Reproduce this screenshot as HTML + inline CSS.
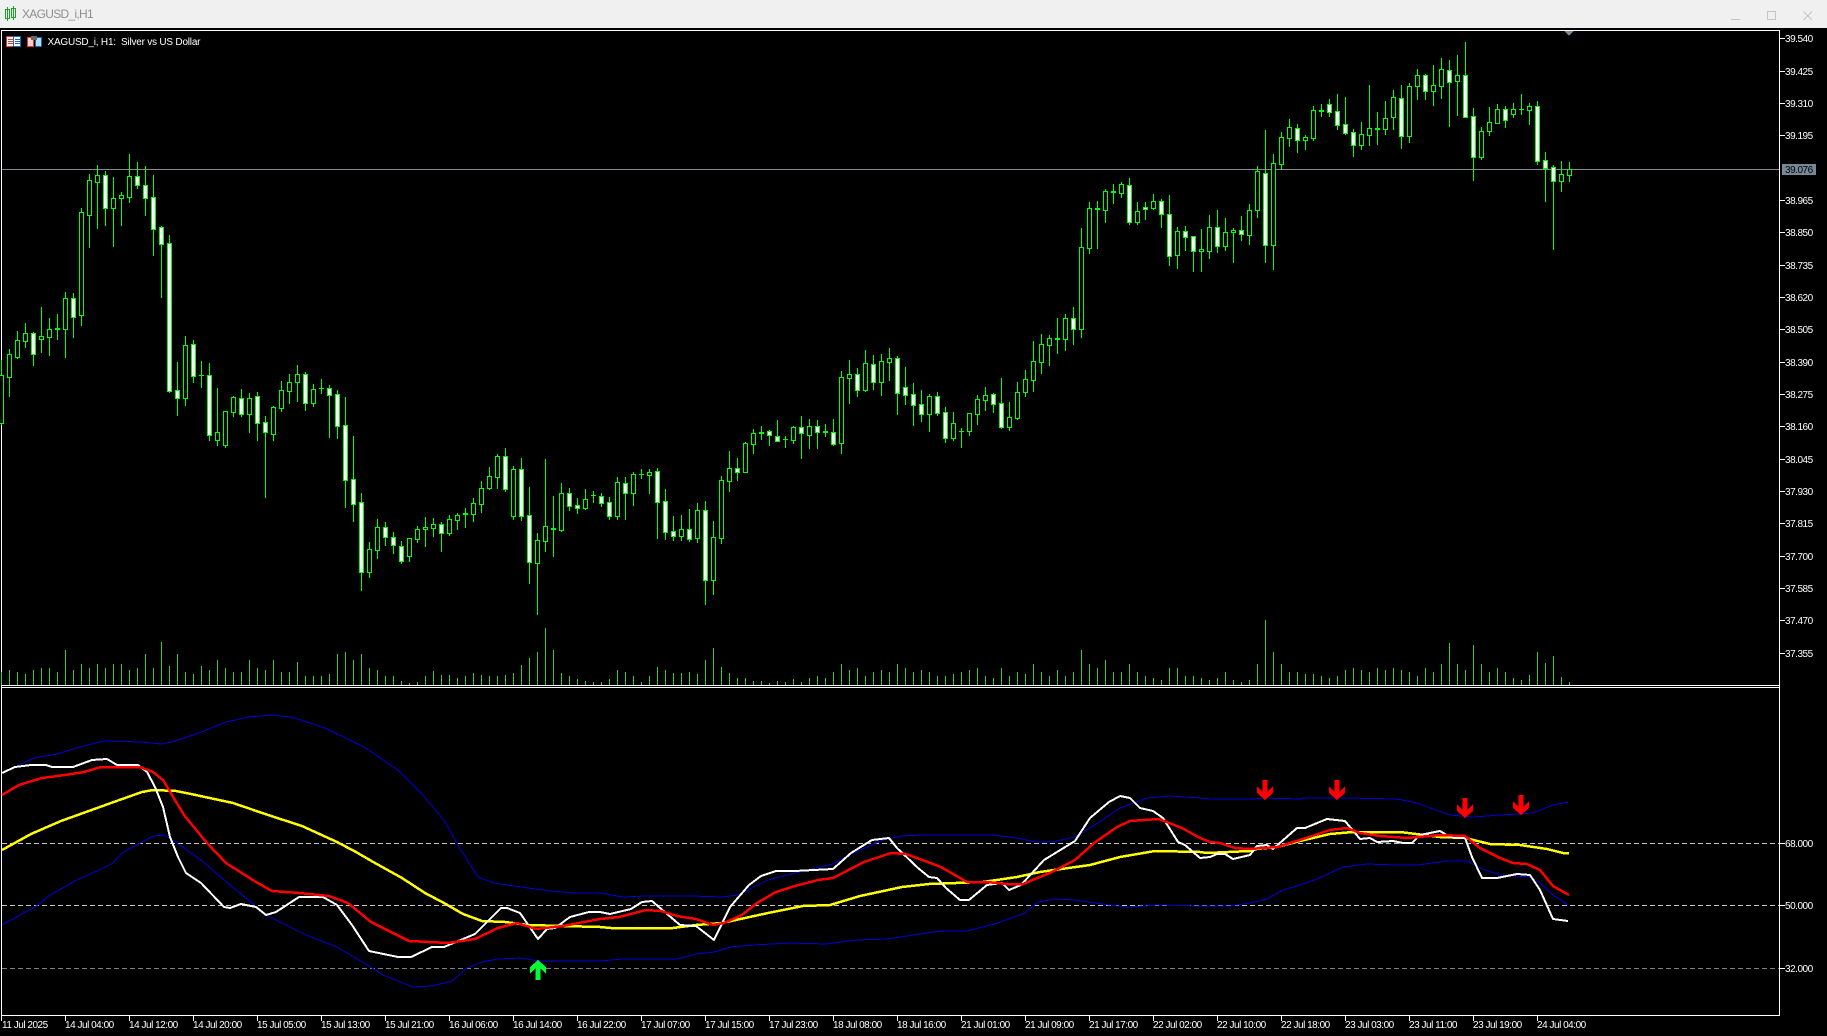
<!DOCTYPE html>
<html><head><meta charset="utf-8"><title>XAGUSD_i,H1</title>
<style>
html,body{margin:0;padding:0;background:#000;width:1827px;height:1036px;overflow:hidden}
svg{display:block}
text{font-family:"Liberation Sans",sans-serif;font-size:10px;fill:#fff;letter-spacing:-.48px;white-space:pre}
.l{fill:none;stroke-linejoin:round}
</style></head><body>
<svg xmlns="http://www.w3.org/2000/svg" width="1827" height="1036" viewBox="0 0 1827 1036">
<rect width="1827" height="1036" fill="#000"/>
<rect width="1827" height="28" fill="#f0f0f0"/>
<g shape-rendering="crispEdges" fill="none" stroke="#1aa32a">
<path d="M5.5 9.5h4v9h-4zM7.5 7V21M11.5 8.5h4v9h-4zM13.5 6V20"/>
</g>
<text x="22" y="18" style="font-size:12px;fill:#8e8e8e;letter-spacing:-.7px">XAGUSD_i,H1</text>
<g fill="none" stroke="#c4c4c4" shape-rendering="crispEdges">
<path d="M1731 19.5h9"/>
<rect x="1767.5" y="11.5" width="8" height="8"/>
</g>
<path d="M1803.5 11.5l8.5 8.5M1812 11.5l-8.5 8.5" stroke="#c4c4c4" fill="none"/>

<g shape-rendering="crispEdges">
<path d="M1 30.5H1779.5M1.5 30V1016M1779.5 30V1016M1 685.5H1780M1 687.5H1780M1 1015.5H1780" stroke="#fff" fill="none"/>
<path d="M2 169.5H1779" stroke="#838b94" fill="none"/>
<path d="M1564.5 31h9l-4.5 5z" fill="#778899"/>
<rect x="6.5" y="36.5" width="7" height="10" fill="#fff" stroke="#e03a30"/>
<rect x="13.5" y="36.5" width="7" height="10" fill="#fff" stroke="#1468b4"/>
<path d="M8 39.5h5M8 41.5h5M8 43.5h5" stroke="#e03a30" fill="none"/>
<path d="M15 39.5h5M15 41.5h5M15 43.5h5" stroke="#1468b4" fill="none"/>
<path d="M27.5 37.5h6v9h-6z" fill="#fbd0c8" stroke="#e03a30"/>
<path d="M35.5 37.5h6v9h-6z" fill="#b8dcf4" stroke="#1468b4"/>
<rect x="31" y="36" width="6" height="4" fill="#666"/>
</g>
<text x="47.5" y="45" textLength="153" lengthAdjust="spacing" style="letter-spacing:0">XAGUSD_i, H1:  Silver vs US Dollar</text>

<!-- volumes -->
<path shape-rendering="crispEdges" fill="none" stroke="#32cd32" d="M1.5 672V685M9.5 670V685M17.5 672V685M25.5 674V685M33.5 670V685M41.5 668V685M49.5 668V685M57.5 672V685M65.5 650V685M73.5 670V685M81.5 664V685M89.5 668V685M97.5 664V685M105.5 668V685M113.5 664V685M121.5 664V685M129.5 670V685M137.5 668V685M145.5 654V685M153.5 668V685M161.5 642V685M169.5 666V685M177.5 654V685M185.5 672V685M193.5 674V685M201.5 666V685M209.5 670V685M217.5 660V685M225.5 668V685M233.5 672V685M241.5 672V685M249.5 660V685M257.5 668V685M265.5 670V685M273.5 660V685M281.5 672V685M289.5 672V685M297.5 662V685M305.5 676V685M313.5 676V685M321.5 676V685M329.5 674V685M337.5 654V685M345.5 652V685M353.5 660V685M361.5 654V685M369.5 668V685M377.5 670V685M385.5 676V685M393.5 676V685M401.5 681V685M409.5 683V685M417.5 682V685M425.5 676V685M433.5 671V685M441.5 675V685M449.5 675V685M457.5 678V685M465.5 676V685M473.5 673V685M481.5 675V685M489.5 676V685M497.5 676V685M505.5 675V685M513.5 673V685M521.5 665V685M529.5 658V685M537.5 652V685M545.5 628V685M553.5 650V685M561.5 673V685M569.5 676V685M577.5 679V685M585.5 681V685M593.5 682V685M601.5 682V685M609.5 679V685M617.5 670V685M625.5 672V685M633.5 676V685M641.5 682V685M649.5 676V685M657.5 667V685M665.5 670V685M673.5 673V685M681.5 673V685M689.5 672V685M697.5 674V685M705.5 660V685M713.5 648V685M721.5 667V685M729.5 673V685M737.5 678V685M745.5 678V685M753.5 681V685M761.5 681V685M769.5 683V685M777.5 681V685M785.5 682V685M793.5 679V685M801.5 682V685M809.5 678V685M817.5 676V685M825.5 678V685M833.5 672V685M841.5 664V685M849.5 670V685M857.5 668V685M865.5 676V685M873.5 672V685M881.5 670V685M889.5 672V685M897.5 664V685M905.5 668V685M913.5 672V685M921.5 670V685M929.5 672V685M937.5 676V685M945.5 676V685M953.5 674V685M961.5 672V685M969.5 670V685M977.5 668V685M985.5 676V685M993.5 678V685M1001.5 668V685M1009.5 676V685M1017.5 672V685M1025.5 674V685M1033.5 664V685M1041.5 672V685M1049.5 676V685M1057.5 670V685M1065.5 676V685M1073.5 672V685M1081.5 650V685M1089.5 664V685M1097.5 668V685M1105.5 660V685M1113.5 672V685M1121.5 672V685M1129.5 664V685M1137.5 672V685M1145.5 676V685M1153.5 678V685M1161.5 680V685M1169.5 668V685M1177.5 668V685M1185.5 676V685M1193.5 676V685M1201.5 678V685M1209.5 680V685M1217.5 678V685M1225.5 672V685M1233.5 680V685M1241.5 682V685M1249.5 680V685M1257.5 664V685M1265.5 620V685M1273.5 652V685M1281.5 664V685M1289.5 672V685M1297.5 672V685M1305.5 674V685M1313.5 674V685M1321.5 676V685M1329.5 678V685M1337.5 676V685M1345.5 670V685M1353.5 668V685M1361.5 670V685M1369.5 672V685M1377.5 668V685M1385.5 670V685M1393.5 668V685M1401.5 670V685M1409.5 672V685M1417.5 676V685M1425.5 668V685M1433.5 672V685M1441.5 664V685M1449.5 643V685M1457.5 664V685M1465.5 670V685M1473.5 645V685M1481.5 664V685M1489.5 672V685M1497.5 668V685M1505.5 672V685M1513.5 678V685M1521.5 680V685M1529.5 675V685M1537.5 652V685M1545.5 663V685M1553.5 656V685M1561.5 677V685M1569.5 682V685"/>

<!-- wicks and doji -->
<path shape-rendering="crispEdges" fill="none" stroke="#0f0" d="M1.5 360V425M9.5 349V397M17.5 331V359M25.5 323V348M33.5 332V366M41.5 307V353M49.5 318V356M57.5 314V340M65.5 292V358M73.5 293V338M81.5 208V326M89.5 174V248M97.5 165V229M105.5 171V226M113.5 177V247M121.5 192V226M129.5 154V203M137.5 162V189M145.5 166V216M153.5 175V256M161.5 226V298M169.5 235V393M177.5 362V416M185.5 336V406M193.5 340V383M201.5 361V388M209.5 363V441M217.5 388V446M225.5 411V448M233.5 396V417M241.5 389V417M249.5 393V433M257.5 392V441M265.5 416V498M273.5 406V441M281.5 381V412M289.5 374V404M297.5 365V402M305.5 372V411M313.5 384V407M321.5 379V394M329.5 385V438M337.5 390V439M345.5 397V508M353.5 436V522M361.5 493V591M369.5 542V578M377.5 519V559M385.5 522V546M393.5 532V554M401.5 541V564M409.5 538V562M417.5 526V543M425.5 517V547M433.5 518V537M441.5 522V552M449.5 515V536M457.5 513V530M465.5 508V528M473.5 498V522M481.5 481V513M489.5 467V490M497.5 454V489M505.5 448V492M513.5 466V520M521.5 458V521M529.5 487V584M537.5 533V615M545.5 459V552M553.5 496V557M561.5 483V532M569.5 488V511M577.5 498V514M585.5 489V510M593.5 491V503M601.5 493V507M609.5 497V520M617.5 477V520M625.5 477V520M633.5 472V506M641.5 469V479M649.5 469V494M657.5 468V539M665.5 489V540M673.5 516V541M681.5 515V541M689.5 509V542M697.5 503V543M705.5 501V605M713.5 521V595M721.5 476V544M729.5 451V492M737.5 458V481M745.5 442V473M753.5 429V454M761.5 426V440M769.5 430V446M777.5 420V442M785.5 436V448M793.5 426V444M801.5 416V459M809.5 419V449M817.5 420V449M825.5 424V437M833.5 419V446M841.5 371V454M849.5 360V404M857.5 368V397M865.5 350V392M873.5 355V390M881.5 354V396M889.5 348V381M897.5 356V415M905.5 367V405M913.5 383V426M921.5 390V422M929.5 394V432M937.5 392V416M945.5 407V443M953.5 412V441M961.5 428V448M969.5 413V436M977.5 395V425M985.5 387V411M993.5 393V413M1001.5 378V429M1009.5 402V431M1017.5 382V420M1025.5 370V397M1033.5 341V392M1041.5 334V374M1049.5 335V366M1057.5 318V354M1065.5 314V351M1073.5 307V345M1081.5 228V338M1089.5 202V254M1097.5 201V249M1105.5 189V223M1113.5 184V204M1121.5 182V198M1129.5 178V225M1137.5 202V225M1145.5 202V220M1153.5 194V210M1161.5 199V228M1169.5 195V266M1177.5 227V269M1185.5 226V251M1193.5 236V272M1201.5 229V272M1209.5 215V259M1217.5 210V253M1225.5 218V251M1233.5 228V263M1241.5 216V241M1249.5 204V245M1257.5 166V218M1265.5 130V263M1273.5 154V270M1281.5 132V170M1289.5 119V147M1297.5 124V153M1305.5 135V150M1313.5 106V141M1321.5 104V117M1329.5 99V117M1337.5 94V130M1345.5 97V135M1353.5 129V157M1361.5 122V150M1369.5 85V146M1377.5 112V145M1385.5 101V135M1393.5 90V130M1401.5 85V149M1409.5 83V143M1417.5 69V100M1425.5 74V100M1433.5 65V106M1441.5 58V99M1449.5 60V127M1457.5 55V116M1465.5 42V118M1473.5 108V181M1481.5 127V160M1489.5 107V136M1497.5 104V124M1505.5 106V128M1513.5 103V118M1521.5 94V115M1529.5 103V125M1537.5 101V165M1545.5 152V202M1553.5 165V250M1561.5 161V192M1569.5 162V182
M55 328.5h5M55 329.5h5M199 375.5h5M319 388.5h5M463 513.5h5M463 514.5h5M551 528.5h5M551 529.5h5M591 495.5h5M639 474.5h5M759 432.5h5M759 433.5h5M783 439.5h5M823 431.5h5M823 432.5h5M959 431.5h5M1055 338.5h5M1055 339.5h5M1095 208.5h5M1095 209.5h5M1111 191.5h5M1111 192.5h5M1319 110.5h5M1319 111.5h5M1375 128.5h5M1375 129.5h5M1519 109.5h5"/>

<!-- bull bodies (hollow) -->
<path shape-rendering="crispEdges" fill="#000" stroke="#0f0" d="M-.5 375.5h4V423.5h-4zM7.5 354.5h4V377.5h-4zM15.5 340.5h4V357.5h-4zM23.5 333.5h4V341.5h-4zM39.5 336.5h4V339.5h-4zM47.5 329.5h4V337.5h-4zM63.5 298.5h4V329.5h-4zM79.5 212.5h4V315.5h-4zM87.5 180.5h4V215.5h-4zM95.5 175.5h4V182.5h-4zM111.5 198.5h4V208.5h-4zM119.5 195.5h4V198.5h-4zM127.5 176.5h4V197.5h-4zM183.5 345.5h4V398.5h-4zM215.5 432.5h4V440.5h-4zM223.5 411.5h4V445.5h-4zM231.5 397.5h4V412.5h-4zM247.5 398.5h4V414.5h-4zM271.5 407.5h4V434.5h-4zM279.5 390.5h4V408.5h-4zM287.5 382.5h4V391.5h-4zM295.5 374.5h4V382.5h-4zM311.5 389.5h4V403.5h-4zM367.5 549.5h4V572.5h-4zM375.5 527.5h4V550.5h-4zM407.5 538.5h4V556.5h-4zM415.5 529.5h4V539.5h-4zM423.5 527.5h4V529.5h-4zM431.5 524.5h4V528.5h-4zM447.5 519.5h4V533.5h-4zM455.5 515.5h4V520.5h-4zM471.5 503.5h4V514.5h-4zM479.5 488.5h4V504.5h-4zM487.5 476.5h4V488.5h-4zM495.5 456.5h4V477.5h-4zM511.5 469.5h4V516.5h-4zM535.5 540.5h4V563.5h-4zM543.5 526.5h4V541.5h-4zM559.5 493.5h4V530.5h-4zM583.5 499.5h4V508.5h-4zM615.5 482.5h4V516.5h-4zM631.5 474.5h4V493.5h-4zM647.5 472.5h4V475.5h-4zM679.5 529.5h4V536.5h-4zM695.5 510.5h4V538.5h-4zM711.5 537.5h4V580.5h-4zM719.5 480.5h4V538.5h-4zM727.5 468.5h4V481.5h-4zM743.5 443.5h4V472.5h-4zM751.5 433.5h4V444.5h-4zM791.5 427.5h4V440.5h-4zM807.5 426.5h4V435.5h-4zM839.5 377.5h4V443.5h-4zM847.5 374.5h4V378.5h-4zM863.5 363.5h4V390.5h-4zM879.5 361.5h4V382.5h-4zM887.5 358.5h4V362.5h-4zM927.5 396.5h4V414.5h-4zM951.5 423.5h4V438.5h-4zM967.5 413.5h4V431.5h-4zM975.5 399.5h4V414.5h-4zM983.5 395.5h4V400.5h-4zM1007.5 417.5h4V427.5h-4zM1015.5 392.5h4V418.5h-4zM1023.5 379.5h4V392.5h-4zM1031.5 361.5h4V380.5h-4zM1039.5 344.5h4V362.5h-4zM1047.5 338.5h4V345.5h-4zM1063.5 318.5h4V339.5h-4zM1079.5 247.5h4V329.5h-4zM1087.5 208.5h4V248.5h-4zM1103.5 191.5h4V210.5h-4zM1119.5 184.5h4V193.5h-4zM1135.5 211.5h4V222.5h-4zM1151.5 201.5h4V208.5h-4zM1175.5 231.5h4V255.5h-4zM1199.5 249.5h4V251.5h-4zM1207.5 227.5h4V251.5h-4zM1223.5 232.5h4V246.5h-4zM1231.5 230.5h4V232.5h-4zM1247.5 210.5h4V235.5h-4zM1255.5 171.5h4V210.5h-4zM1271.5 163.5h4V245.5h-4zM1279.5 137.5h4V164.5h-4zM1287.5 127.5h4V138.5h-4zM1303.5 137.5h4V140.5h-4zM1311.5 110.5h4V138.5h-4zM1359.5 134.5h4V145.5h-4zM1367.5 128.5h4V135.5h-4zM1383.5 118.5h4V129.5h-4zM1391.5 97.5h4V117.5h-4zM1407.5 86.5h4V136.5h-4zM1415.5 75.5h4V86.5h-4zM1431.5 85.5h4V91.5h-4zM1439.5 69.5h4V86.5h-4zM1455.5 75.5h4V81.5h-4zM1479.5 131.5h4V157.5h-4zM1487.5 122.5h4V131.5h-4zM1495.5 109.5h4V123.5h-4zM1511.5 109.5h4V114.5h-4zM1527.5 106.5h4V110.5h-4zM1559.5 174.5h4V181.5h-4zM1567.5 169.5h4V175.5h-4z"/>

<!-- bear bodies (white) -->
<path shape-rendering="crispEdges" fill="#fff" stroke="#0f0" d="M31.5 333.5h4V354.5h-4zM71.5 298.5h4V317.5h-4zM103.5 175.5h4V208.5h-4zM135.5 176.5h4V185.5h-4zM143.5 185.5h4V198.5h-4zM151.5 197.5h4V229.5h-4zM159.5 227.5h4V244.5h-4zM167.5 243.5h4V391.5h-4zM175.5 390.5h4V398.5h-4zM191.5 344.5h4V376.5h-4zM207.5 375.5h4V435.5h-4zM239.5 398.5h4V414.5h-4zM255.5 396.5h4V423.5h-4zM263.5 422.5h4V432.5h-4zM303.5 374.5h4V403.5h-4zM327.5 388.5h4V395.5h-4zM335.5 394.5h4V426.5h-4zM343.5 425.5h4V480.5h-4zM351.5 479.5h4V504.5h-4zM359.5 502.5h4V572.5h-4zM383.5 527.5h4V537.5h-4zM391.5 537.5h4V545.5h-4zM399.5 546.5h4V561.5h-4zM439.5 524.5h4V533.5h-4zM503.5 456.5h4V489.5h-4zM519.5 469.5h4V516.5h-4zM527.5 515.5h4V562.5h-4zM567.5 493.5h4V506.5h-4zM575.5 505.5h4V508.5h-4zM599.5 496.5h4V503.5h-4zM607.5 502.5h4V516.5h-4zM623.5 483.5h4V493.5h-4zM655.5 471.5h4V502.5h-4zM663.5 501.5h4V532.5h-4zM671.5 531.5h4V536.5h-4zM687.5 529.5h4V539.5h-4zM703.5 510.5h4V580.5h-4zM735.5 468.5h4V472.5h-4zM767.5 431.5h4V435.5h-4zM775.5 436.5h4V441.5h-4zM799.5 427.5h4V433.5h-4zM815.5 426.5h4V432.5h-4zM831.5 432.5h4V444.5h-4zM855.5 374.5h4V390.5h-4zM871.5 364.5h4V382.5h-4zM895.5 358.5h4V393.5h-4zM903.5 387.5h4V395.5h-4zM911.5 394.5h4V405.5h-4zM919.5 404.5h4V414.5h-4zM935.5 396.5h4V413.5h-4zM943.5 412.5h4V438.5h-4zM991.5 394.5h4V404.5h-4zM999.5 403.5h4V427.5h-4zM1071.5 318.5h4V329.5h-4zM1127.5 185.5h4V222.5h-4zM1143.5 207.5h4V209.5h-4zM1159.5 201.5h4V214.5h-4zM1167.5 214.5h4V256.5h-4zM1183.5 231.5h4V237.5h-4zM1191.5 236.5h4V251.5h-4zM1215.5 227.5h4V246.5h-4zM1239.5 230.5h4V234.5h-4zM1263.5 173.5h4V245.5h-4zM1295.5 128.5h4V140.5h-4zM1327.5 104.5h4V112.5h-4zM1335.5 111.5h4V125.5h-4zM1343.5 124.5h4V133.5h-4zM1351.5 132.5h4V145.5h-4zM1399.5 98.5h4V136.5h-4zM1423.5 75.5h4V91.5h-4zM1447.5 70.5h4V82.5h-4zM1463.5 75.5h4V117.5h-4zM1471.5 116.5h4V157.5h-4zM1503.5 109.5h4V120.5h-4zM1535.5 106.5h4V161.5h-4zM1543.5 160.5h4V168.5h-4zM1551.5 167.5h4V181.5h-4z"/>

<!-- level lines -->
<g shape-rendering="crispEdges" fill="none" stroke-dasharray="5 3">
<path d="M2 843.5H1779M2 905.5H1779" stroke="#c8c8c8"/>
<path d="M2 968.5H1779" stroke="#808080"/>
</g>

<!-- indicator lines -->
<g shape-rendering="crispEdges" class="l">
<polyline class="l" stroke="#0000d8" stroke-width="1" points="2,773 15,767 34,758 57,754 77,748 103,741 142,742 161,744 172,742 199,733 226,722 249,717 272,715 291,717 325,728 364,747 398,770 421,793 444,820 459,847 478,877 494,883 528,888 551,891 574,893 600,893 623,897 646,896 692,896 722,897 738,895 768,880 799,872 833,864 849,855 883,840 902,836 921,835 994,835 1017,838 1036,842 1052,842 1075,837 1098,823 1120,808 1147,798 1170,796 1200,798 1210,799 1253,799 1263,798 1300,799 1303,798 1347,798 1397,799 1417,803 1433,809 1450,815 1473,817 1500,815 1533,813 1553,805 1568,802"/>
<polyline class="l" stroke="#0000d8" stroke-width="1" points="2,925 38,905 50,895 77,880 99,870 113,863 122,853 142,842 153,836 165,835 184,848 201,860 230,885 268,916 306,935 337,947 364,963 383,975 413,987 432,986 452,981 467,968 482,962 498,959 520,958 540,961 600,961 623,959 677,959 696,954 715,952 730,947 753,945 791,943 826,944 856,940 887,939 933,932 944,931 967,931 998,923 1025,913 1038,902 1055,899 1075,900 1109,905 1128,907 1159,905 1200,906 1230,906 1250,903 1267,899 1283,890 1300,885 1317,879 1343,867 1367,864 1397,865 1417,865 1447,861 1467,861 1480,868 1500,875 1530,877 1540,883 1553,895 1568,905"/>
<polyline class="l" stroke="#ff0" stroke-width="2.5" points="2,850 31,834 61,821 111,803 142,792 153,790 176,791 191,794 233,803 268,815 302,826 337,842 356,852 375,863 402,878 425,893 444,903 463,914 482,921 505,922 528,925 563,926 600,927 611,928 673,928 696,925 722,923 768,913 803,906 830,905 860,896 902,887 929,884 983,882 1017,877 1040,872 1090,865 1120,857 1155,851 1200,852 1207,853 1250,851 1257,849 1277,847 1300,841 1330,834 1353,832 1400,832 1440,837 1465,838 1490,844 1520,845 1547,849 1563,853 1569,853"/>
<polyline class="l" stroke="#fff" stroke-width="2" points="2,773 15,767 31,765 46,765 52,767 73,767 92,760 107,759 117,765 138,765 147,772 155,787 163,807 170,837 178,857 186,873 201,883 224,907 230,908 241,904 256,907 266,915 276,912 299,897 323,897 337,905 352,925 369,951 398,957 411,957 432,947 444,947 475,934 501,908 507,908 520,913 538,939 547,929 555,928 570,917 589,912 600,912 610,914 631,909 642,902 652,901 680,925 696,926 714,940 730,907 749,885 761,876 776,871 795,871 833,869 851,853 872,840 889,838 897,848 918,868 929,877 937,878 946,888 960,900 969,900 987,885 1002,883 1009,890 1021,885 1044,860 1075,841 1090,818 1109,802 1120,796 1130,798 1140,808 1153,811 1163,818 1178,842 1185,845 1200,858 1210,857 1217,854 1225,854 1233,859 1250,855 1257,846 1267,845 1273,849 1297,828 1305,828 1327,819 1345,821 1360,839 1370,838 1377,842 1393,841 1403,843 1412,843 1420,835 1440,831 1450,837 1465,838 1472,857 1482,878 1497,878 1517,874 1530,875 1540,890 1553,919 1568,921"/>
<polyline class="l" stroke="#f00" stroke-width="2.5" points="2,795 19,785 42,778 65,775 84,772 101,767 140,767 153,772 163,780 184,815 207,843 226,863 256,882 272,891 299,893 329,896 348,903 371,922 409,941 448,943 475,939 498,928 517,923 536,929 563,926 600,919 619,917 646,910 661,911 677,916 696,919 713,925 724,923 742,915 757,903 776,892 795,886 818,880 833,878 864,862 891,853 906,854 941,867 967,882 987,882 1006,884 1023,884 1052,872 1075,860 1094,843 1117,827 1130,821 1159,819 1182,828 1200,838 1210,842 1220,843 1235,848 1250,849 1277,847 1303,839 1330,830 1347,828 1360,833 1380,836 1407,838 1440,835 1465,836 1480,848 1500,858 1513,863 1527,864 1540,870 1553,886 1569,895"/>
</g>

<!-- signal arrows -->
<g fill="#f00" shape-rendering="crispEdges">
<path d="M1262.5 780h5v12l5.5-6v7l-8 7-8-7v-7l5.5 6z"/>
<path d="M1334.5 780h5v12l5.5-6v7l-8 7-8-7v-7l5.5 6z"/>
<path d="M1462.5 798h5v12l5.5-6v7l-8 7-8-7v-7l5.5 6z"/>
<path d="M1518.5 795h5v12l5.5-6v7l-8 7-8-7v-7l5.5 6z"/>
</g>
<path shape-rendering="crispEdges" fill="#0f3" d="M535.5 980h5v-12l5.5 6v-7l-8-7-8 7v7l5.5-6z"/>

<!-- axis ticks -->
<path shape-rendering="crispEdges" fill="none" stroke="#fff" d="M1780 38.5h5M1780 71.5h5M1780 103.5h5M1780 135.5h5M1780 200.5h5M1780 232.5h5M1780 265.5h5M1780 297.5h5M1780 329.5h5M1780 362.5h5M1780 394.5h5M1780 426.5h5M1780 459.5h5M1780 491.5h5M1780 523.5h5M1780 556.5h5M1780 588.5h5M1780 620.5h5M1780 653.5h5M1780 843.5h5M1780 905.5h5M1780 968.5h5M1.5 1016v5M65.5 1016v5M129.5 1016v5M193.5 1016v5M257.5 1016v5M321.5 1016v5M385.5 1016v5M449.5 1016v5M513.5 1016v5M577.5 1016v5M641.5 1016v5M705.5 1016v5M769.5 1016v5M833.5 1016v5M897.5 1016v5M961.5 1016v5M1025.5 1016v5M1089.5 1016v5M1153.5 1016v5M1217.5 1016v5M1281.5 1016v5M1345.5 1016v5M1409.5 1016v5M1473.5 1016v5M1537.5 1016v5"/>

<!-- price labels -->
<text x="1785" y="42">39.540</text>
<text x="1785" y="75">39.425</text>
<text x="1785" y="107">39.310</text>
<text x="1785" y="139">39.195</text>
<rect x="1782" y="164" width="34" height="11" fill="#778899"/>
<text x="1785" y="173" style="fill:#000">39.076</text>
<text x="1785" y="204">38.965</text>
<text x="1785" y="236">38.850</text>
<text x="1785" y="269">38.735</text>
<text x="1785" y="301">38.620</text>
<text x="1785" y="333">38.505</text>
<text x="1785" y="366">38.390</text>
<text x="1785" y="398">38.275</text>
<text x="1785" y="430">38.160</text>
<text x="1785" y="463">38.045</text>
<text x="1785" y="495">37.930</text>
<text x="1785" y="527">37.815</text>
<text x="1785" y="560">37.700</text>
<text x="1785" y="592">37.585</text>
<text x="1785" y="624">37.470</text>
<text x="1785" y="657">37.355</text>
<text x="1785" y="847">68.000</text>
<text x="1785" y="909">50.000</text>
<text x="1785" y="972">32.000</text>

<!-- time labels -->
<text x="2" y="1028">11 Jul 2025</text>
<text x="65" y="1028">14 Jul 04:00</text>
<text x="129" y="1028">14 Jul 12:00</text>
<text x="193" y="1028">14 Jul 20:00</text>
<text x="257" y="1028">15 Jul 05:00</text>
<text x="321" y="1028">15 Jul 13:00</text>
<text x="385" y="1028">15 Jul 21:00</text>
<text x="449" y="1028">16 Jul 06:00</text>
<text x="513" y="1028">16 Jul 14:00</text>
<text x="577" y="1028">16 Jul 22:00</text>
<text x="641" y="1028">17 Jul 07:00</text>
<text x="705" y="1028">17 Jul 15:00</text>
<text x="769" y="1028">17 Jul 23:00</text>
<text x="833" y="1028">18 Jul 08:00</text>
<text x="897" y="1028">18 Jul 16:00</text>
<text x="961" y="1028">21 Jul 01:00</text>
<text x="1025" y="1028">21 Jul 09:00</text>
<text x="1089" y="1028">21 Jul 17:00</text>
<text x="1153" y="1028">22 Jul 02:00</text>
<text x="1217" y="1028">22 Jul 10:00</text>
<text x="1281" y="1028">22 Jul 18:00</text>
<text x="1345" y="1028">23 Jul 03:00</text>
<text x="1409" y="1028">23 Jul 11:00</text>
<text x="1473" y="1028">23 Jul 19:00</text>
<text x="1537" y="1028">24 Jul 04:00</text>
</svg>
</body></html>
